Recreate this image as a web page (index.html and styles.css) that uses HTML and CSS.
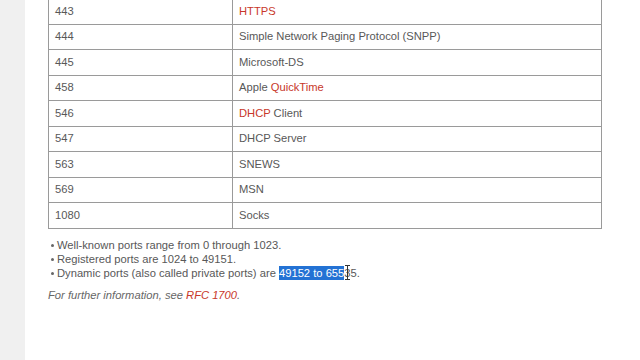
FILE: index.html
```html
<!DOCTYPE html>
<html lang="en">
<head>
<meta charset="utf-8">
<title>Port numbers</title>
<link rel="stylesheet" href="styles.css">
</head>
<body>
<div class="page">
  <aside class="rail"></aside>
  <main class="content">
    <table class="ports">
      <tbody>
        <tr><td class="num">443</td><td><a href="#">HTTPS</a></td></tr>
        <tr><td class="num">444</td><td>Simple Network Paging Protocol (SNPP)</td></tr>
        <tr><td class="num">445</td><td>Microsoft-DS</td></tr>
        <tr><td class="num">458</td><td>Apple <a href="#">QuickTime</a></td></tr>
        <tr><td class="num">546</td><td><a href="#">DHCP</a> Client</td></tr>
        <tr><td class="num">547</td><td>DHCP Server</td></tr>
        <tr><td class="num">563</td><td>SNEWS</td></tr>
        <tr><td class="num">569</td><td>MSN</td></tr>
        <tr><td class="num">1080</td><td>Socks</td></tr>
      </tbody>
    </table>
    <ul class="notes">
      <li>Well-known ports range from 0 through 1023.</li>
      <li>Registered ports are 1024 to 49151.</li>
      <li>Dynamic ports (also called private ports) are <span class="sel">49152 to 655</span><span class="caret">3</span>5.</li>
    </ul>
    <p class="more">For further information, see <a href="#">RFC 1700</a>.</p>
  </main>
</div>
</body>
</html>
```

FILE: styles.css
```css
html, body {
  margin: 0;
  padding: 0;
  background: #fff;
}

body {
  font-family: "Liberation Sans", Arial, sans-serif;
  font-size: 11.2px;
  color: #585858;
  overflow: hidden;
}

.page {
  display: flex;
  height: 360px;
}

.rail {
  width: 25px;
  flex: none;
  background: #f0f0f0;
}

.content {
  flex: 1;
  padding-left: 23px;
  margin-top: -2px;
}

a {
  color: #c8372a;
  text-decoration: none;
}

.ports {
  width: 554px;
  border-collapse: collapse;
  border: 1px solid #8c8c8c;
}

.ports td {
  border: 1px solid #9a9a9a;
  height: 25.5px;
  padding: 0 6px;
  box-sizing: border-box;
  vertical-align: middle;
  line-height: 13px;
}

.ports td.num {
  width: 184px;
}

.notes {
  margin: 9px 0 0 0;
  padding: 0 0 0 9px;
  list-style: none;
}

.notes li {
  position: relative;
  line-height: 14px;
}

.notes li::before {
  content: "";
  position: absolute;
  left: -6px;
  top: 6px;
  width: 3px;
  height: 3px;
  border-radius: 50%;
  background: #666;
}

.sel {
  background: #2372d4;
  color: #fff;
  padding: 1px 0;
}

.caret {
  position: relative;
}

.caret::after {
  content: "";
  position: absolute;
  left: 1px;
  top: -2px;
  width: 5px;
  height: 15px;
  border-top: 1px solid #333;
  border-bottom: 1px solid #333;
  box-sizing: border-box;
  background: linear-gradient(#333, #333) center / 1px 100% no-repeat;
}

.more {
  margin: 9px 0 0 0;
  font-style: italic;
  color: #666;
}
```
